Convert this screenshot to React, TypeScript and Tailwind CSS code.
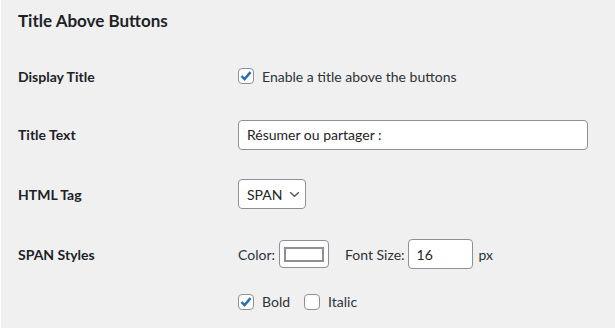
import { useState } from "react";

function Check({ checked, onChange }: { checked: boolean; onChange: () => void }) {
  return (
    <button
      type="button"
      onClick={onChange}
      className="w-4 h-4 shrink-0 bg-white border border-[#8c8f94] rounded-[4px] flex items-center justify-center">
      {checked && (
        <svg viewBox="0 0 16 16" className="w-[16px] h-[16px]">
          <path d="M2.8 8 L6.3 11.6 L13.2 3.6" fill="none" stroke="#2271b1" strokeWidth="2.8" />
        </svg>
      )}
    </button>
  );
}

export default function App() {
  const [display, setDisplay] = useState(true);
  const [bold, setBold] = useState(true);
  const [italic, setItalic] = useState(false);
  const [title, setTitle] = useState("Résumer ou partager :");
  const [size, setSize] = useState("16");

  return (
    <main
      className="w-[615px] h-[328px] bg-[#f0f0f1] border-l border-white text-[#1d2327] text-[14px] px-[17px] overflow-hidden"
      style={{ fontFamily: "Lato, sans-serif" }}>
      <h2 className="h-[42px] flex items-center text-[17px] font-bold">Title Above Buttons</h2>

      <div className="mt-[5px] h-[58px] flex items-center">
        <div className="w-[220px] font-bold">Display Title</div>
        <label className="flex items-center gap-[8px]">
          <Check checked={display} onChange={() => setDisplay(!display)} />
          <span className="text-[#2c3338]">Enable a title above the buttons</span>
        </label>
      </div>

      <div className="h-[59px] flex items-center">
        <div className="w-[220px] font-bold">Title Text</div>
        <input
          value={title}
          onChange={(e) => setTitle(e.target.value)}
          className="w-[350px] h-[30px] bg-white border border-[#8c8f94] rounded-[4px] px-[8px] outline-none"
        />
      </div>

      <div className="h-[60px] flex items-center">
        <div className="w-[220px] font-bold">HTML Tag</div>
        <div className="w-[68px] h-[30px] bg-white border border-[#8c8f94] rounded-[4px] pl-[8px] flex items-center gap-[7px]">
          <span>SPAN</span>
          <svg viewBox="0 0 12 8" className="w-[11px] h-[7px]">
            <path d="M1 1.5 L6 6 L11 1.5" fill="none" stroke="#50575e" strokeWidth="1.6" />
          </svg>
        </div>
      </div>

      <div className="pt-[15px] flex">
        <div className="w-[220px] h-[30px] flex items-center font-bold">SPAN Styles</div>
        <div className="flex flex-col">
          <div className="h-[30px] flex items-center text-[#2c3338]">
            <span>Color:</span>
            <div className="ml-[4px] w-[50px] h-[28px] bg-white border border-[#8c8f94] rounded-[4px] flex items-center justify-center">
              <div className="w-[40px] h-[15px] border-2 border-[#8c8f94] bg-white" />
            </div>
            <span className="ml-[16px]">Font Size:</span>
            <input
              value={size}
              onChange={(e) => setSize(e.target.value)}
              className="ml-[3px] w-[65px] h-[30px] bg-white border border-[#8c8f94] rounded-[4px] px-[8px] outline-none text-[#1d2327]"
            />
            <span className="ml-[6px]">px</span>
          </div>
          <div className="mt-[22px] flex items-center text-[#2c3338]">
            <label className="flex items-center gap-[8px]">
              <Check checked={bold} onChange={() => setBold(!bold)} />
              <span>Bold</span>
            </label>
            <label className="ml-[14px] flex items-center gap-[8px]">
              <Check checked={italic} onChange={() => setItalic(!italic)} />
              <span>Italic</span>
            </label>
          </div>
        </div>
      </div>
    </main>
  );
}
